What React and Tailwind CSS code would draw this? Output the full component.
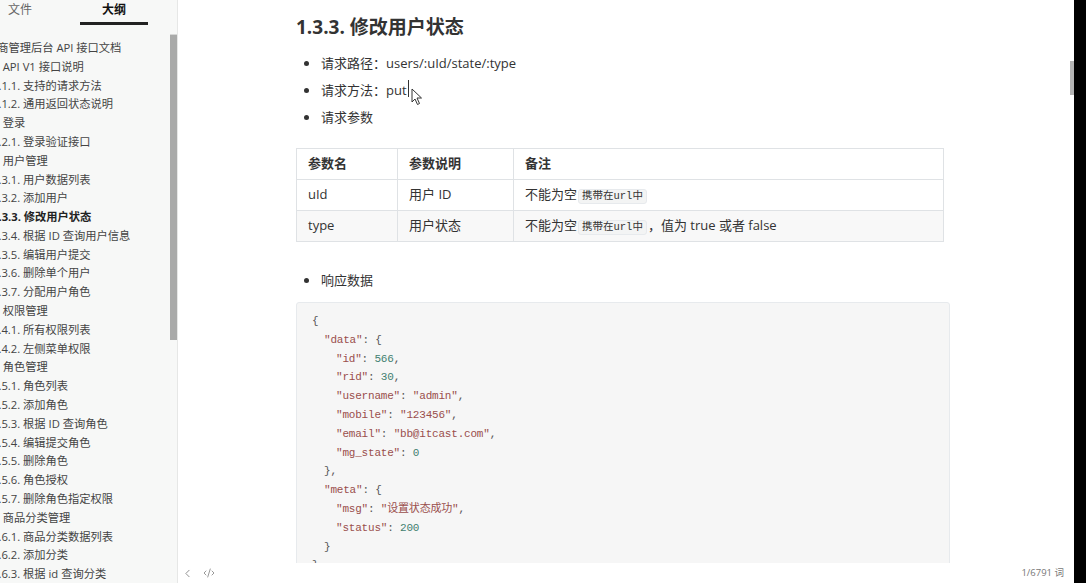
import { ChevronLeft, CodeXml } from 'lucide-react';

const outline = [
  { lv: 1, text: '电商管理后台 API 接口文档' },
  { lv: 2, text: '1.1. API V1 接口说明' },
  { lv: 3, text: '1.1.1. 支持的请求方法' },
  { lv: 3, text: '1.1.2. 通用返回状态说明' },
  { lv: 2, text: '1.2. 登录' },
  { lv: 3, text: '1.2.1. 登录验证接口' },
  { lv: 2, text: '1.3. 用户管理' },
  { lv: 3, text: '1.3.1. 用户数据列表' },
  { lv: 3, text: '1.3.2. 添加用户' },
  { lv: 3, text: '1.3.3. 修改用户状态', active: true },
  { lv: 3, text: '1.3.4. 根据 ID 查询用户信息' },
  { lv: 3, text: '1.3.5. 编辑用户提交' },
  { lv: 3, text: '1.3.6. 删除单个用户' },
  { lv: 3, text: '1.3.7. 分配用户角色' },
  { lv: 2, text: '1.4. 权限管理' },
  { lv: 3, text: '1.4.1. 所有权限列表' },
  { lv: 3, text: '1.4.2. 左侧菜单权限' },
  { lv: 2, text: '1.5. 角色管理' },
  { lv: 3, text: '1.5.1. 角色列表' },
  { lv: 3, text: '1.5.2. 添加角色' },
  { lv: 3, text: '1.5.3. 根据 ID 查询角色' },
  { lv: 3, text: '1.5.4. 编辑提交角色' },
  { lv: 3, text: '1.5.5. 删除角色' },
  { lv: 3, text: '1.5.6. 角色授权' },
  { lv: 3, text: '1.5.7. 删除角色指定权限' },
  { lv: 2, text: '1.6. 商品分类管理' },
  { lv: 3, text: '1.6.1. 商品分类数据列表' },
  { lv: 3, text: '1.6.2. 添加分类' },
  { lv: 3, text: '1.6.3. 根据 id 查询分类' },
];

const sans = 'font-["Open_Sans","Noto_Sans_CJK_SC",sans-serif]';

// code lines: [indent, tokens]
const S = 'text-[#9a4e4c]';
const N = 'text-[#427f70]';
const P = 'text-[#555]';
const code = [
  [0, [['{', P]]],
  [1, [['"data"', S], [': {', P]]],
  [2, [['"id"', S], [': ', P], ['566', N], [',', P]]],
  [2, [['"rid"', S], [': ', P], ['30', N], [',', P]]],
  [2, [['"username"', S], [': ', P], ['"admin"', S], [',', P]]],
  [2, [['"mobile"', S], [': ', P], ['"123456"', S], [',', P]]],
  [2, [['"email"', S], [': ', P], ['"bb@itcast.com"', S], [',', P]]],
  [2, [['"mg_state"', S], [': ', P], ['0', N]]],
  [1, [['},', P]]],
  [1, [['"meta"', S], [': {', P]]],
  [2, [['"msg"', S], [': ', P], ['"设置状态成功"', S], [',', P]]],
  [2, [['"status"', S], [': ', P], ['200', N]]],
  [1, [['}', P]]],
  [0, [['}', P]]],
];

function InlineCode() {
  return (
    <span className="inline-flex items-center h-[15px] px-[3px] mx-[1px] rounded-[3px] border border-[#e7eaed] bg-[#f3f4f4] text-[10.5px] leading-none text-[#333] font-['Liberation_Mono','Noto_Sans_CJK_SC',monospace]">
      携带在url中
    </span>
  );
}

function Bullet({ children }) {
  return (
    <li className="flex items-center h-[27px] pl-[8px]">
      <span className="w-[5px] h-[5px] rounded-full bg-[#333] shrink-0" />
      <span className="ml-[12px]">{children}</span>
    </li>
  );
}

export default function App() {
  return (
    <div className={`flex h-[583px] w-[1086px] overflow-hidden bg-black ${sans}`}>
      {/* Sidebar */}
      <aside className="relative w-[178px] shrink-0 bg-[#f7f8f7] border-r border-[#e6e7e6] flex flex-col">
        <div className="h-[39px] flex items-start pt-[2px] text-[12px]">
          <div className="w-[40px] text-center text-[#666] leading-[16px]">文件</div>
          <div className="ml-[40px] w-[68px] flex flex-col items-center">
            <span className="font-bold text-[#111] leading-[16px]">大纲</span>
            <span className="mt-[4px] w-[68px] h-[3px] bg-[#222]" />
          </div>
        </div>
        <ul className="overflow-hidden text-[11.25px] leading-[18.8px] text-[#444] pr-[8px]">
          {outline.map((o, i) => (
            <li
              key={i}
              className={`whitespace-nowrap ${
                o.lv === 1 ? 'ml-[-14px]' : o.lv === 2 ? 'ml-[-19px]' : 'ml-[-8px]'
              } ${o.active ? 'font-bold text-[#222]' : ''}`}
            >
              {o.text}
            </li>
          ))}
        </ul>
        <div className="absolute right-0 top-[34px] w-[7px] h-[1px] bg-[#d6d7d6]" />
        <div className="absolute right-0 top-[35px] w-[7px] h-[305px] bg-[#a9aaa9]" />
      </aside>

      {/* Main */}
      <main className="relative flex-1 bg-white flex flex-col">
        <div className="flex-1 overflow-hidden pl-[118px] pt-[14px] text-[#333]">
          <div className="w-[654px]">
            <h3 className="text-[19px] font-bold leading-[26px] text-[#333]">1.3.3. 修改用户状态</h3>

            <ul className="mt-[10px] text-[13px]">
              <Bullet>请求路径：users/:uId/state/:type</Bullet>
              <Bullet>
                <span className="relative">
                  请求方法：put
                  <span className="absolute right-[-2px] top-[-1px] w-[1px] h-[17px] bg-[#333]" />
                </span>
              </Bullet>
              <Bullet>请求参数</Bullet>
            </ul>

            <table className="mt-[17px] w-[648px] border-collapse text-[13px] table-fixed">
              <colgroup>
                <col className="w-[101px]" />
                <col className="w-[116px]" />
                <col />
              </colgroup>
              <thead>
                <tr className="h-[31px]">
                  <th className="border border-[#dfe2e5] px-[11px] text-left font-bold">参数名</th>
                  <th className="border border-[#dfe2e5] px-[11px] text-left font-bold">参数说明</th>
                  <th className="border border-[#dfe2e5] px-[11px] text-left font-bold">备注</th>
                </tr>
              </thead>
              <tbody>
                <tr className="h-[31px]">
                  <td className="border border-[#dfe2e5] px-[11px]">uId</td>
                  <td className="border border-[#dfe2e5] px-[11px]">用户 ID</td>
                  <td className="border border-[#dfe2e5] px-[11px]">
                    不能为空<InlineCode />
                  </td>
                </tr>
                <tr className="h-[31px] bg-[#f8f8f8]">
                  <td className="border border-[#dfe2e5] px-[11px]">type</td>
                  <td className="border border-[#dfe2e5] px-[11px]">用户状态</td>
                  <td className="border border-[#dfe2e5] px-[11px]">
                    不能为空<InlineCode />，值为 true 或者 false
                  </td>
                </tr>
              </tbody>
            </table>

            <ul className="mt-[25px] text-[13px]">
              <Bullet>响应数据</Bullet>
            </ul>

            <pre className="mt-[8px] border border-[#e7eaed] bg-[#f6f6f6] rounded-[3px] pl-[15px] pt-[9px] pb-[8px] text-[11px] leading-[18.8px] tracking-[-0.2px] font-['Liberation_Mono','Noto_Sans_CJK_SC',monospace]">
              {code.map(([ind, toks], i) => (
                <div key={i} style={{ paddingLeft: ind * 12 }}>
                  {toks.map(([t, c], j) => (
                    <span key={j} className={c}>{t}</span>
                  ))}
                </div>
              ))}
            </pre>
          </div>
        </div>

        {/* Footer */}
        <footer className="h-[20px] shrink-0 bg-white flex items-center pl-[3px] pr-[10px] text-[#777]">
          <ChevronLeft size={13} strokeWidth={1.5} />
          <CodeXml size={12} strokeWidth={1.5} className="ml-[9px]" />
          <span className="ml-auto text-[9.5px]">1/6791 词</span>
        </footer>

        {/* scrollbar */}
        <div className="absolute right-0 top-[61px] w-[4px] h-[34px] bg-[#b3b3b3]" />

        {/* mouse pointer */}
        <svg className="absolute left-[233px] top-[88px]" width="12" height="18" viewBox="0 0 12 18">
          <path d="M1 1 L1 14 L4 11 L6.5 16.5 L8.5 15.5 L6 10 L10.5 10 Z" fill="white" stroke="#333" strokeWidth="1" strokeLinejoin="round" />
        </svg>
      </main>

      <div className="w-[12px] shrink-0 bg-black" />
    </div>
  );
}
